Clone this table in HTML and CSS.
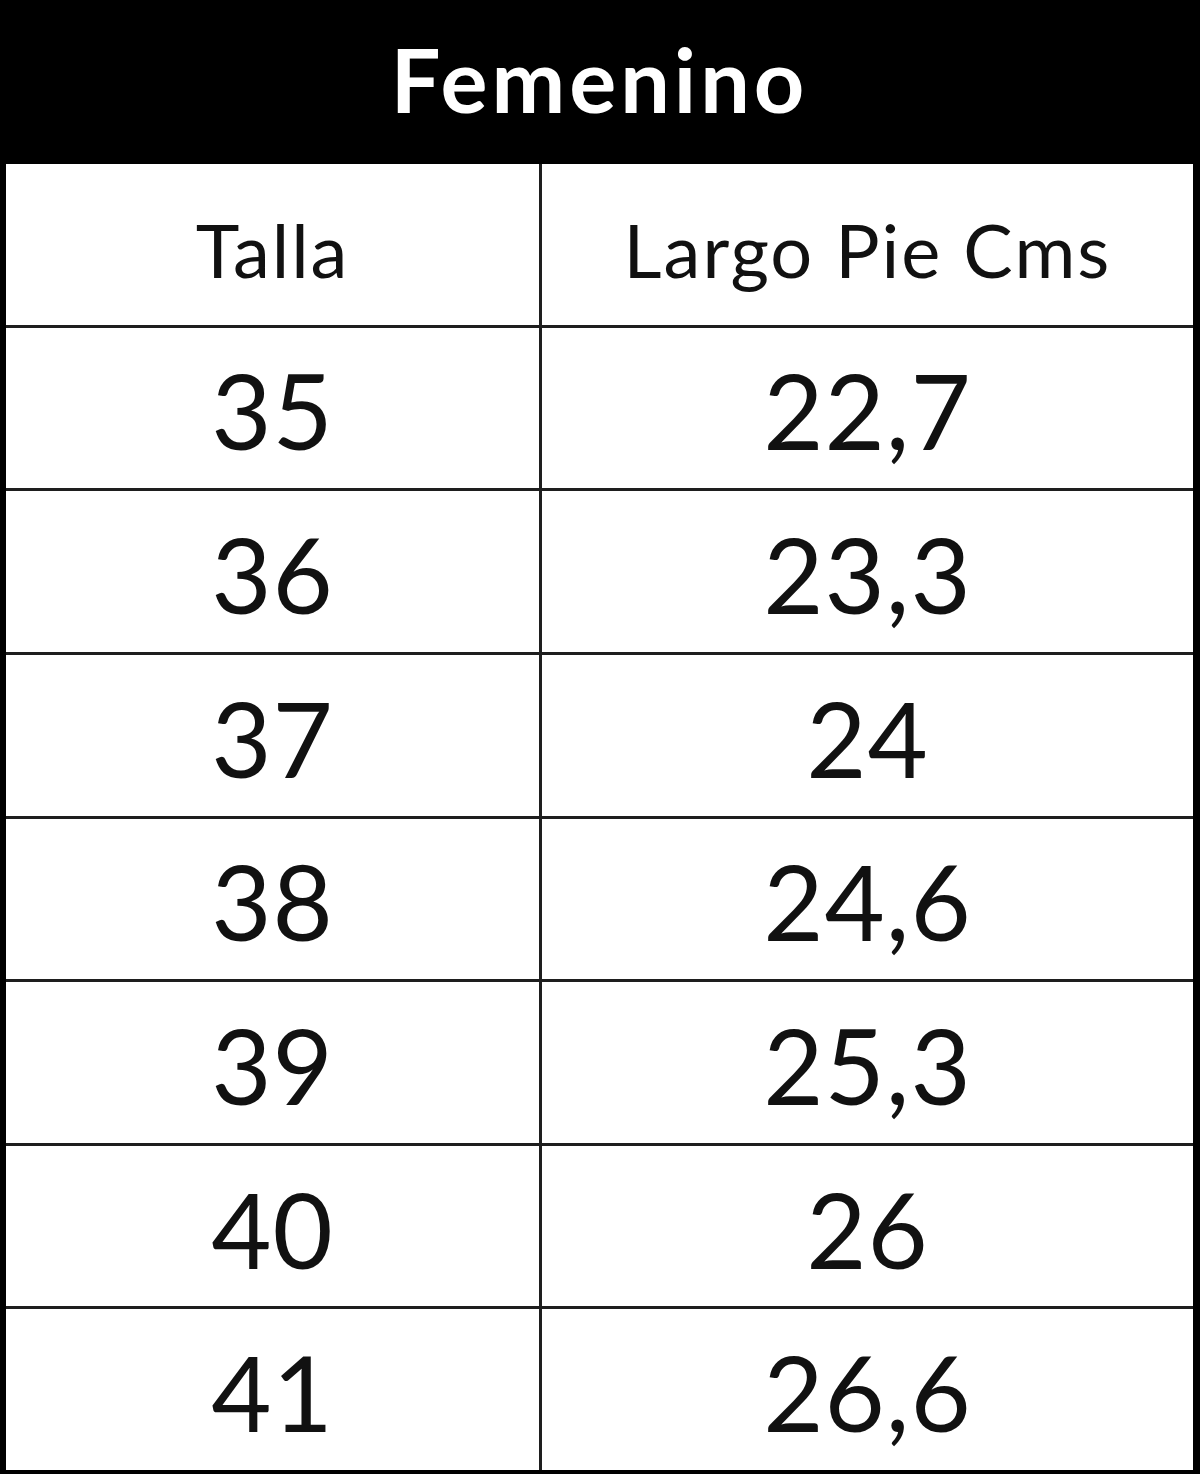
FILE: index.html
```html
<!DOCTYPE html>
<html lang="es">
<head>
<meta charset="utf-8">
<title>Femenino</title>
<link rel="stylesheet" href="styles.css">
</head>
<body>
<div class="sheet">
  <div class="title">Femenino</div>
  <div class="grid">
    <div class="cell head">Talla</div><div class="cell head">Largo Pie Cms</div>
    <div class="cell num">35</div><div class="cell num">22,7</div>
    <div class="cell num">36</div><div class="cell num">23,3</div>
    <div class="cell num">37</div><div class="cell num">24</div>
    <div class="cell num">38</div><div class="cell num">24,6</div>
    <div class="cell num">39</div><div class="cell num">25,3</div>
    <div class="cell num">40</div><div class="cell num">26</div>
    <div class="cell num">41</div><div class="cell num">26,6</div>
  </div>
</div>
</body>
</html>
```
FILE: styles.css
```css
html, body {
  margin: 0;
  padding: 0;
  background: #000;
}
.sheet {
  width: 1200px;
  height: 1474px;
  box-sizing: border-box;
  background: #000;
  padding: 0 7px 4px 6px;
  display: flex;
  flex-direction: column;
  font-family: Lato, "Liberation Sans", sans-serif;
}
.title {
  height: 164px;
  flex: none;
  display: flex;
  align-items: center;
  justify-content: center;
  color: #fff;
  font-weight: 700;
  font-size: 88px;
  letter-spacing: 4px;
  padding-bottom: 6px;
  box-sizing: border-box;
}
.grid {
  flex: 1;
  display: grid;
  grid-template-columns: 533px 1fr;
  grid-template-rows: repeat(8, 1fr);
  gap: 3px;
  background: #1e1e1e;
}
.cell {
  background: #fff;
  display: flex;
  align-items: center;
  justify-content: center;
  color: #111;
}
.head {
  font-size: 74px;
  letter-spacing: 2px;
  padding-top: 10px;
  box-sizing: border-box;
}
.num {
  font-size: 104px;
  letter-spacing: 1px;
  padding-top: 4px;
  box-sizing: border-box;
}
```
